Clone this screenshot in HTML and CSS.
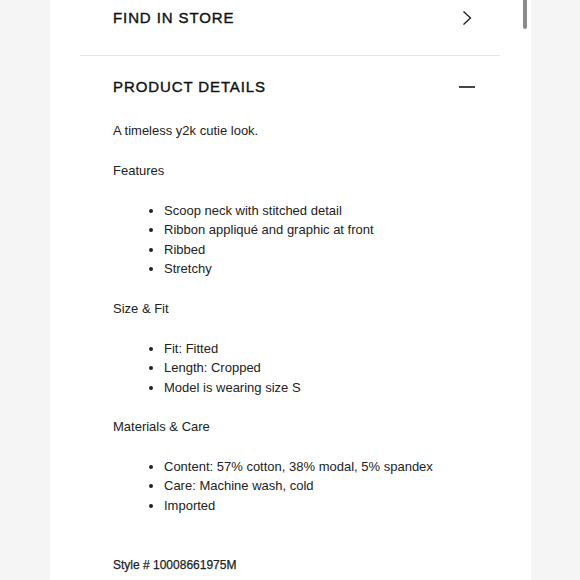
FILE: index.html
```html
<!DOCTYPE html>
<html>
<head>
<meta charset="utf-8">
<link rel="stylesheet" href="styles.css">
</head>
<body>
<div class="panel">
  <div class="scrollbar"></div>
  <div class="content">
    <div class="row row-store">
      <span class="row-title">FIND IN STORE</span>
      <svg class="icon" width="16" height="16" viewBox="0 0 16 16"><path d="M4.5 1.5 L11.5 8 L4.5 14.5" fill="none" stroke="#1a1a1a" stroke-width="1.3"/></svg>
    </div>
    <div class="row row-details">
      <span class="row-title">PRODUCT DETAILS</span>
      <svg class="icon" width="16" height="16" viewBox="0 0 16 16"><path d="M0 8 H16" fill="none" stroke="#1a1a1a" stroke-width="1.6"/></svg>
    </div>
    <div class="details">
      <p>A timeless y2k cutie look.</p>
      <p>Features</p>
      <ul>
        <li>Scoop neck with stitched detail</li>
        <li>Ribbon appliqué and graphic at front</li>
        <li>Ribbed</li>
        <li>Stretchy</li>
      </ul>
      <p>Size &amp; Fit</p>
      <ul>
        <li>Fit: Fitted</li>
        <li>Length: Cropped</li>
        <li>Model is wearing size S</li>
      </ul>
      <p>Materials &amp; Care</p>
      <ul>
        <li>Content: 57% cotton, 38% modal, 5% spandex</li>
        <li>Care: Machine wash, cold</li>
        <li>Imported</li>
      </ul>
      <p class="style-no">Style # 10008661975M</p>
    </div>
  </div>
</div>
</body>
</html>
```

FILE: styles.css
```css
html, body {
  margin: 0;
  padding: 0;
  background: #f5f5f5;
}
body {
  font-family: "Liberation Sans", Arial, sans-serif;
  color: #222;
  height: 580px;
  overflow: hidden;
}
.panel {
  position: relative;
  margin-left: 50px;
  width: 481px;
  height: 580px;
  background: #fff;
}
.scrollbar {
  position: absolute;
  left: 473px;
  top: 0;
  width: 4px;
  height: 29px;
  border-radius: 0 0 2px 2px;
  background: #8a8a8a;
}
.content {
  margin-left: 30px;
  width: 420px;
}
.row {
  display: flex;
  justify-content: space-between;
  align-items: center;
  padding-left: 33px;
  padding-right: 25px;
  height: 20px;
}
.row-title {
  font-size: 15px;
  letter-spacing: 0.9px;
  color: #111;
  line-height: 20px;
  -webkit-text-stroke: 0.4px #111;
}
.row-store {
  padding-top: 8px;
  padding-bottom: 27px;
  border-bottom: 1px solid #e6e6e6;
}
.icon {
  display: block;
}
.row-details {
  padding-top: 21px;
  padding-bottom: 24px;
}
.details {
  padding-left: 33px;
  font-size: 13px;
  line-height: 19.45px;
}
.details p {
  margin: 0 0 20.5px;
}
.details ul {
  margin: 0 0 20px;
  padding-left: 51px;
}
.details .style-no {
  margin-top: 40.5px;
  font-size: 12px;
  color: #222;
  -webkit-text-stroke: 0.25px #222;
}
```
